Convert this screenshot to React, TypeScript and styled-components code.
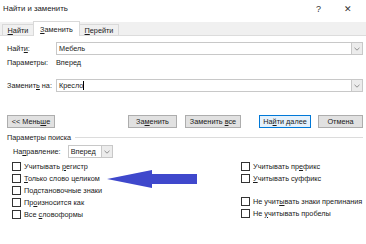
import { FC, ReactNode } from "react";
import styled, { createGlobalStyle } from "styled-components";

const GlobalStyle = createGlobalStyle`
    html, body {
        margin: 0;
        padding: 0;
        background: #ffffff;
    }
    body {
        font-family: "Liberation Sans", Arial, sans-serif;
        font-size: 7.3px;
        color: #1a1a1a;
    }
`;

const Dialog = styled.div`
    position: relative;
    width: 366px;
    height: 244px;
    overflow: hidden;
    background: #ffffff;
    white-space: nowrap;
`;

const TitleBar = styled.div`
    display: flex;
    align-items: center;
    height: 17px;
    padding: 0 4px 0 3px;
    font-size: 7.8px;
`;

const Title = styled.div`
    flex: 1;
`;

const TitleButton = styled.div`
    width: 29px;
    text-align: center;
    color: #333;
    font-size: 9px;
`;

const TabStrip = styled.div`
    display: flex;
    align-items: flex-end;
    margin-top: 5px;
    height: 13px;
    padding-left: 3px;
    background: #f0f0f0;
    border-bottom: 1px solid #dcdcdc;
`;

const Tab = styled.div<{ $active?: boolean; $w: number }>`
    display: flex;
    align-items: center;
    justify-content: center;
    width: ${(p) => p.$w}px;
    box-sizing: border-box;
    height: ${(p) => (p.$active ? "15px" : "11px")};
    margin-bottom: ${(p) => (p.$active ? "-1px" : "0")};
    background: ${(p) => (p.$active ? "#ffffff" : "#f0f0f0")};
    border: 1px solid #d9d9d9;
    border-bottom: none;
    margin-left: -1px;
`;

const Body = styled.div`
    display: flex;
    flex-direction: column;
    padding: 6px 3px 0 7px;
`;

const FieldRow = styled.div`
    display: flex;
    align-items: center;
    height: 13px;
`;

const Label = styled.div`
    width: 49px;
`;

const Combo = styled.div`
    flex: 1;
    display: flex;
    height: 13px;
    box-sizing: border-box;
    border: 1px solid #c8c8c8;
    background: #fff;
`;

const ComboText = styled.div`
    flex: 1;
    display: flex;
    align-items: center;
    padding-left: 2px;
`;

const Caret = styled.span`
    display: inline-block;
    width: 1px;
    height: 9px;
    background: #000;
`;

const DropButton = styled.div`
    width: 10px;
    display: flex;
    align-items: center;
    justify-content: center;
    background: #ececec;
    border-left: 1px solid #c8c8c8;
`;

const ParamRow = styled.div`
    display: flex;
    align-items: center;
    height: 13px;
    margin-top: 1px;
`;

const Spacer = styled.div<{ $h: number }>`
    height: ${(p) => p.$h}px;
`;

const ButtonRow = styled.div`
    display: flex;
    align-items: center;
    height: 13px;
`;

const Button = styled.div<{ $w: number; $default?: boolean; $gap?: number }>`
    width: ${(p) => p.$w}px;
    height: 13px;
    box-sizing: border-box;
    display: flex;
    align-items: center;
    justify-content: center;
    background: ${(p) => (p.$default ? "#e5f1fb" : "#e1e1e1")};
    border: 1px solid ${(p) => (p.$default ? "#0078d7" : "#adadad")};
    margin-left: ${(p) => (p.$gap ? `${p.$gap}px` : "0")};
`;

const ButtonGroup = styled.div`
    display: flex;
    margin-left: auto;
`;

const GroupHeader = styled.div`
    display: flex;
    align-items: center;
    gap: 4px;
    height: 11px;
    margin-top: 4px;
    &::after {
        content: "";
        flex: 1;
        height: 1px;
        background: #dcdcdc;
    }
`;

const DirectionRow = styled.div`
    display: flex;
    align-items: center;
    height: 13px;
    margin-top: 2px;
    margin-left: 6px;
`;

const SmallSelect = styled.div`
    display: flex;
    width: 45px;
    height: 13px;
    box-sizing: border-box;
    border: 1px solid #c8c8c8;
    margin-left: 7px;
`;

const Options = styled.div`
    display: grid;
    grid-template-columns: 229px 1fr;
    margin-left: 5px;
    margin-top: 2px;
`;

const Column = styled.div`
    display: flex;
    flex-direction: column;
`;

const Check = styled.div`
    display: flex;
    align-items: center;
    height: 12px;
    gap: 3px;
`;

const Box = styled.span`
    width: 9px;
    height: 9px;
    box-sizing: border-box;
    border: 1px solid #333;
    background: #fff;
`;

const Key = styled.u`
    text-decoration-thickness: 1px;
    text-underline-offset: 1px;
`;

const Arrow = styled.svg`
    position: absolute;
    left: 0;
    top: 0;
    pointer-events: none;
`;

const Chevron: FC = () => (
    <svg width="6" height="4" viewBox="0 0 6 4">
        <path d="M0.5 0.8 L3 3.2 L5.5 0.8" stroke="#777" strokeWidth="0.8" fill="none" />
    </svg>
);

const CheckItem: FC<{ children: ReactNode }> = ({ children }) => (
    <Check>
        <Box />
        <span>{children}</span>
    </Check>
);

export default function App() {
    return (
        <Dialog>
            <GlobalStyle />
            <TitleBar>
                <Title>Найти и заменить</Title>
                <TitleButton>?</TitleButton>
                <TitleButton>✕</TitleButton>
            </TitleBar>

            <TabStrip>
                <Tab $w={32}><span><Key>Н</Key>айти</span></Tab>
                <Tab $w={47} $active><span><Key>З</Key>аменить</span></Tab>
                <Tab $w={40}><span><Key>П</Key>ерейти</span></Tab>
            </TabStrip>

            <Body>
                <FieldRow>
                    <Label>Найт<Key>и</Key>:</Label>
                    <Combo>
                        <ComboText>Мебель</ComboText>
                        <DropButton><Chevron /></DropButton>
                    </Combo>
                </FieldRow>
                <ParamRow>
                    <Label>Параметры:</Label>
                    <span>Вперед</span>
                </ParamRow>

                <Spacer $h={10} />

                <FieldRow>
                    <Label>Заменит<Key>ь</Key> на:</Label>
                    <Combo>
                        <ComboText>Кресло<Caret /></ComboText>
                        <DropButton><Chevron /></DropButton>
                    </Combo>
                </FieldRow>

                <Spacer $h={23} />

                <ButtonRow>
                    <Button $w={48}><span>&lt;&lt; Мень<Key>ш</Key>е</span></Button>
                    <ButtonGroup>
                        <Button $w={49}><span>За<Key>м</Key>енить</span></Button>
                        <Button $w={56} $gap={8}><span>Заменить <Key>в</Key>се</span></Button>
                        <Button $w={52} $gap={18} $default><span>На<Key>й</Key>ти далее</span></Button>
                        <Button $w={45} $gap={7}><span>Отмена</span></Button>
                    </ButtonGroup>
                </ButtonRow>

                <GroupHeader>Параметры поиска</GroupHeader>

                <DirectionRow>
                    <span>На<Key>п</Key>равление:</span>
                    <SmallSelect>
                        <ComboText>Вперед</ComboText>
                        <DropButton><Chevron /></DropButton>
                    </SmallSelect>
                </DirectionRow>

                <Options>
                    <Column>
                        <CheckItem>Учитывать <Key>р</Key>егистр</CheckItem>
                        <CheckItem><Key>Т</Key>олько слово целиком</CheckItem>
                        <CheckItem>По<Key>д</Key>становочные знаки</CheckItem>
                        <CheckItem>Пр<Key>о</Key>износится как</CheckItem>
                        <CheckItem>Все <Key>с</Key>ловоформы</CheckItem>
                    </Column>
                    <Column>
                        <CheckItem>Учитывать пр<Key>е</Key>фикс</CheckItem>
                        <CheckItem><Key>У</Key>читывать суффикс</CheckItem>
                        <Spacer $h={11} />
                        <CheckItem>Не учит<Key>ы</Key>вать знаки препинания</CheckItem>
                        <CheckItem>Не <Key>у</Key>читывать пробелы</CheckItem>
                    </Column>
                </Options>
            </Body>

            <Arrow width="366" height="244" viewBox="0 0 366 244">
                <path d="M107 179 L152 170 L152 174 L197 174 L197 184 L152 184 L152 188 Z" fill="#3f48cc" />
            </Arrow>
        </Dialog>
    );
}
